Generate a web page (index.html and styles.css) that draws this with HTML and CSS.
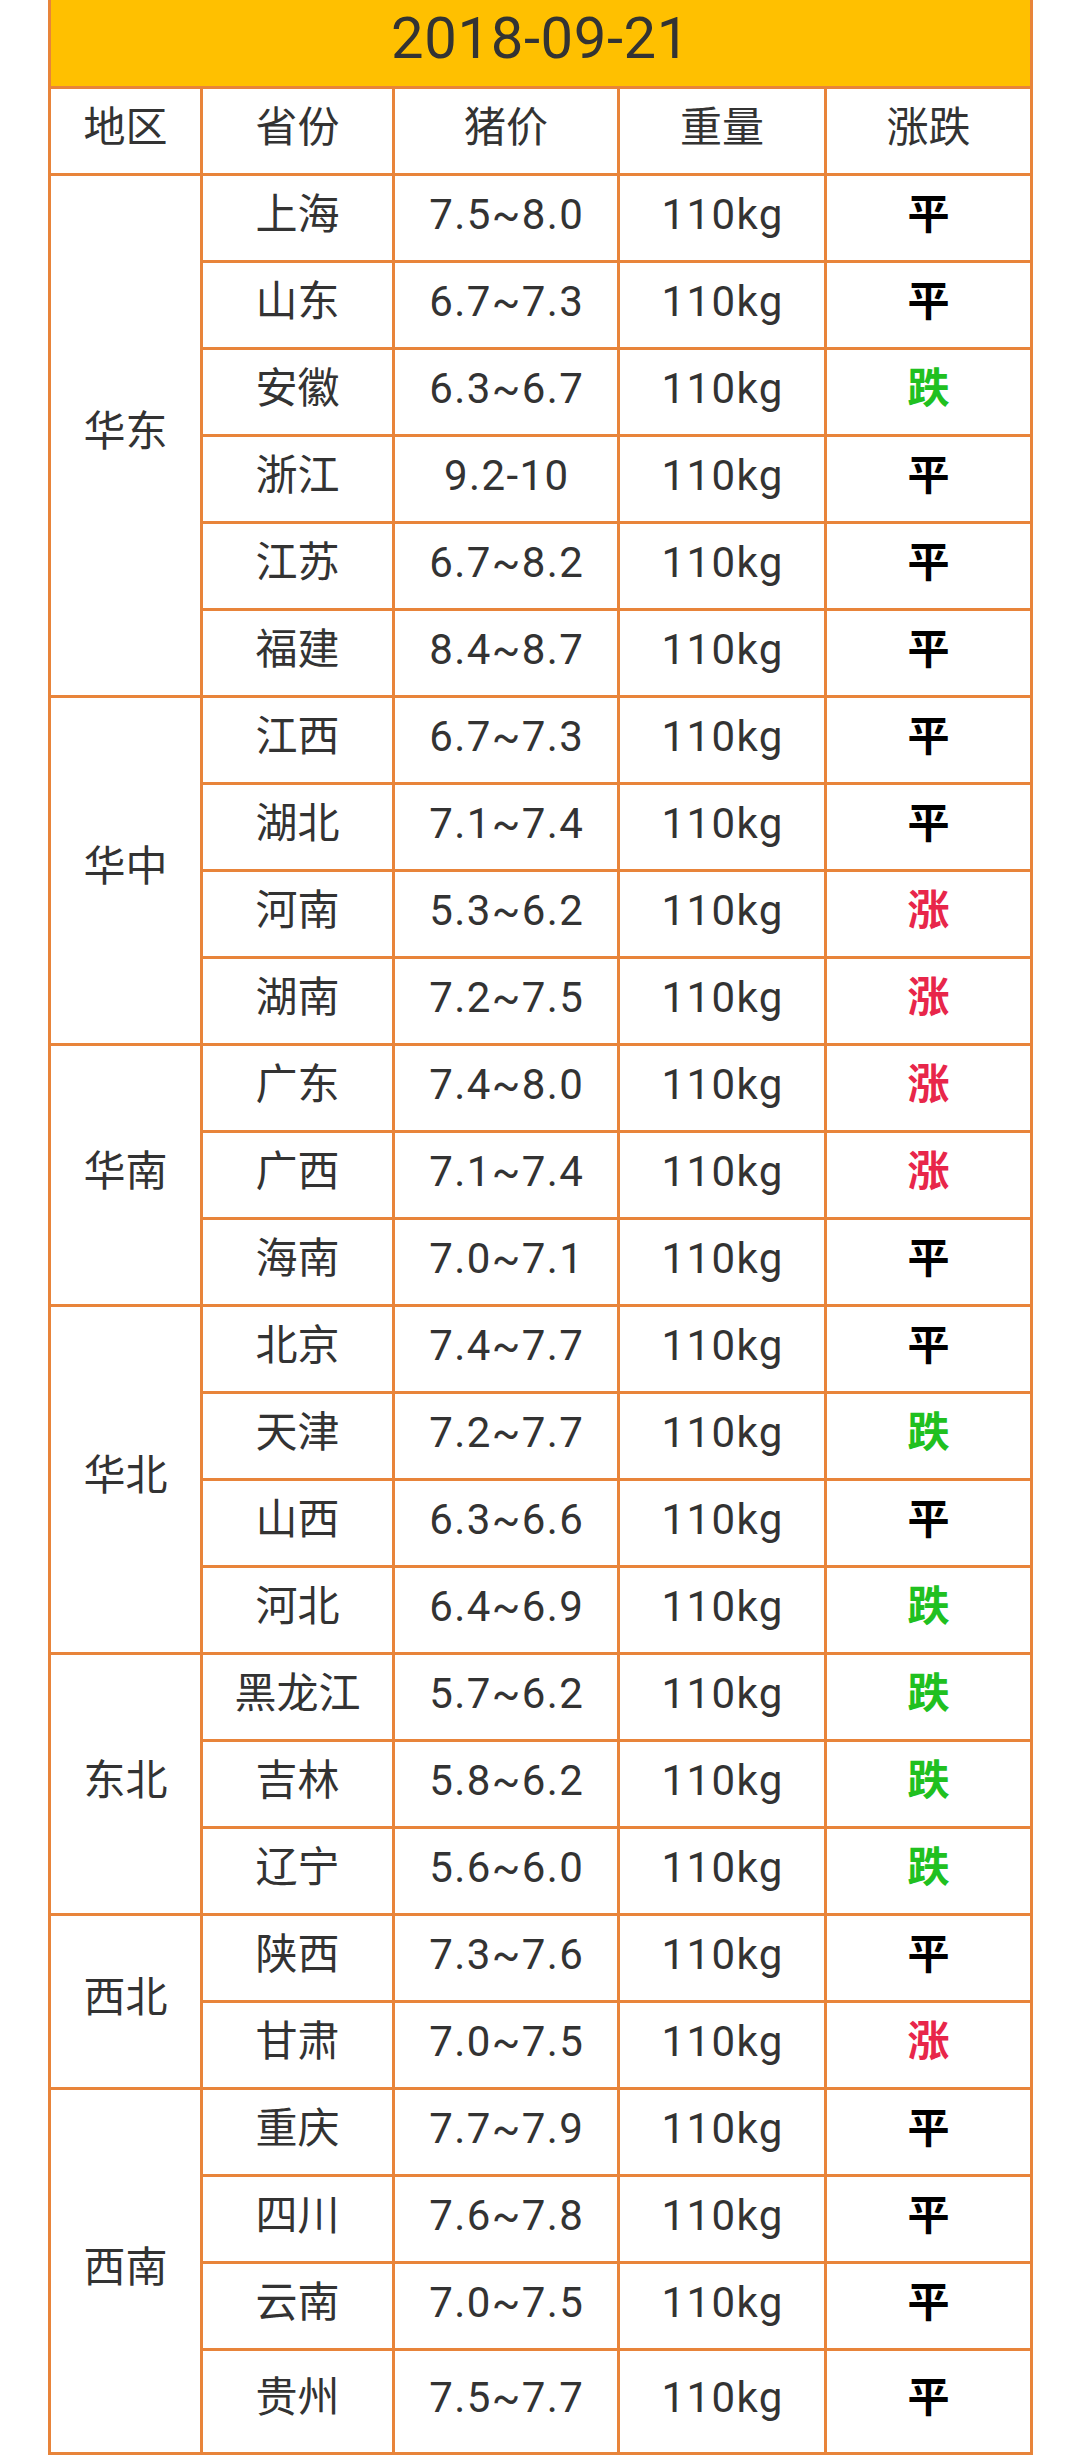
FILE: index.html
```html
<!DOCTYPE html>
<html lang="zh">
<head>
<meta charset="utf-8">
<title>2018-09-21 猪价</title>
<link rel="stylesheet" href="styles.css">
</head>
<body>
<table class="price">
<colgroup>
<col class="c-region"><col class="c-prov"><col class="c-price"><col class="c-weight"><col class="c-trend">
</colgroup>
<tr><td class="date" colspan="5">2018-09-21</td></tr>
<tr class="head"><td>地区</td><td>省份</td><td>猪价</td><td>重量</td><td>涨跌</td></tr>
<tr><td class="region" rowspan="6">华东</td><td>上海</td><td class="num">7.5~8.0</td><td class="num">110kg</td><td class="flat">平</td></tr>
<tr><td>山东</td><td class="num">6.7~7.3</td><td class="num">110kg</td><td class="flat">平</td></tr>
<tr><td>安徽</td><td class="num">6.3~6.7</td><td class="num">110kg</td><td class="down">跌</td></tr>
<tr><td>浙江</td><td class="num">9.2-10</td><td class="num">110kg</td><td class="flat">平</td></tr>
<tr><td>江苏</td><td class="num">6.7~8.2</td><td class="num">110kg</td><td class="flat">平</td></tr>
<tr><td>福建</td><td class="num">8.4~8.7</td><td class="num">110kg</td><td class="flat">平</td></tr>
<tr><td class="region" rowspan="4">华中</td><td>江西</td><td class="num">6.7~7.3</td><td class="num">110kg</td><td class="flat">平</td></tr>
<tr><td>湖北</td><td class="num">7.1~7.4</td><td class="num">110kg</td><td class="flat">平</td></tr>
<tr><td>河南</td><td class="num">5.3~6.2</td><td class="num">110kg</td><td class="up">涨</td></tr>
<tr><td>湖南</td><td class="num">7.2~7.5</td><td class="num">110kg</td><td class="up">涨</td></tr>
<tr><td class="region" rowspan="3">华南</td><td>广东</td><td class="num">7.4~8.0</td><td class="num">110kg</td><td class="up">涨</td></tr>
<tr><td>广西</td><td class="num">7.1~7.4</td><td class="num">110kg</td><td class="up">涨</td></tr>
<tr><td>海南</td><td class="num">7.0~7.1</td><td class="num">110kg</td><td class="flat">平</td></tr>
<tr><td class="region" rowspan="4">华北</td><td>北京</td><td class="num">7.4~7.7</td><td class="num">110kg</td><td class="flat">平</td></tr>
<tr><td>天津</td><td class="num">7.2~7.7</td><td class="num">110kg</td><td class="down">跌</td></tr>
<tr><td>山西</td><td class="num">6.3~6.6</td><td class="num">110kg</td><td class="flat">平</td></tr>
<tr><td>河北</td><td class="num">6.4~6.9</td><td class="num">110kg</td><td class="down">跌</td></tr>
<tr><td class="region" rowspan="3">东北</td><td>黑龙江</td><td class="num">5.7~6.2</td><td class="num">110kg</td><td class="down">跌</td></tr>
<tr><td>吉林</td><td class="num">5.8~6.2</td><td class="num">110kg</td><td class="down">跌</td></tr>
<tr><td>辽宁</td><td class="num">5.6~6.0</td><td class="num">110kg</td><td class="down">跌</td></tr>
<tr><td class="region" rowspan="2">西北</td><td>陕西</td><td class="num">7.3~7.6</td><td class="num">110kg</td><td class="flat">平</td></tr>
<tr><td>甘肃</td><td class="num">7.0~7.5</td><td class="num">110kg</td><td class="up">涨</td></tr>
<tr><td class="region" rowspan="4">西南</td><td>重庆</td><td class="num">7.7~7.9</td><td class="num">110kg</td><td class="flat">平</td></tr>
<tr><td>四川</td><td class="num">7.6~7.8</td><td class="num">110kg</td><td class="flat">平</td></tr>
<tr><td>云南</td><td class="num">7.0~7.5</td><td class="num">110kg</td><td class="flat">平</td></tr>
<tr class="last"><td>贵州</td><td class="num">7.5~7.7</td><td class="num">110kg</td><td class="flat">平</td></tr>
</table>
</body>
</html>
```
FILE: styles.css
```css
html, body {
  margin: 0;
  padding: 0;
  background: #ffffff;
}
body {
  font-family: Roboto, "Noto Sans CJK SC", sans-serif;
  color: #333333;
}
.price {
  border-collapse: collapse;
  table-layout: fixed;
  width: 982px;
  margin-left: 48px;
}
.c-region { width: 152px; }
.c-prov { width: 192px; }
.c-price { width: 225px; }
.c-weight { width: 207px; }
.c-trend { width: 206px; }
.price td {
  border: 3px solid #e8843a;
  height: 87px;
  padding: 0 0 6px 0;
  text-align: center;
  vertical-align: middle;
  font-size: 42px;
  line-height: 1;
  box-sizing: border-box;
}
.price td.num {
  letter-spacing: 1.4px;
  text-indent: 1.4px;
}
.price td.date {
  background: #ffc000;
  border-top: none;
  height: 87px;
  font-size: 58px;
  letter-spacing: 0.6px;
  padding-bottom: 10px;
  color: #333333;
}
.price .last td {
  height: 104px;
}
.price td.flat,
.price td.up,
.price td.down {
  font-weight: bold;
}
.price td.flat { color: #000000; }
.price td.up { color: #e8264a; }
.price td.down { color: #20c020; }
```
